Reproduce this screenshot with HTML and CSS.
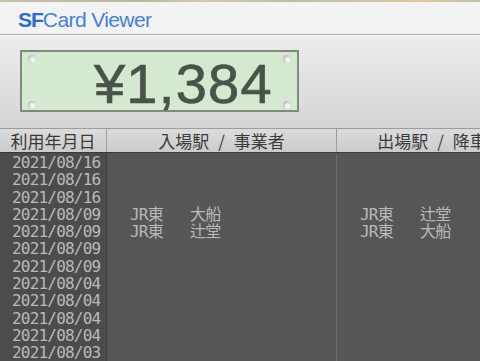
FILE: index.html
```html
<!DOCTYPE html>
<html lang="ja">
<head>
    <meta charset="UTF-8">
    <title>SFCard Viewer</title>
    <link rel="stylesheet" href="styles.css">
</head>
<body>
    <div class="window-edge"></div>

    <div class="titlebar">
        <span class="title"><b>SF</b>Card Viewer</span>
    </div>

    <div class="panel">
        <div class="display">
            <span class="screw tl"></span>
            <span class="screw bl"></span>
            <span class="screw tr"></span>
            <span class="screw br"></span>
            ¥1,384
        </div>
    </div>

    <div class="history">
        <div class="thead">
            <div class="th">利用年月日</div>
            <div class="th">入場駅 / 事業者</div>
            <div class="th">出場駅 / 降車駅</div>
        </div>

        <div class="tbody">
            <div class="row"><div class="date">2021/08/16</div><div class="cell"></div><div class="cell"></div></div>
            <div class="row"><div class="date">2021/08/16</div><div class="cell"></div><div class="cell"></div></div>
            <div class="row"><div class="date">2021/08/16</div><div class="cell"></div><div class="cell"></div></div>
            <div class="row">
                <div class="date">2021/08/09</div>
                <div class="cell"><span class="co">JR東</span>大船</div>
                <div class="cell"><span class="co">JR東</span>辻堂</div>
            </div>
            <div class="row">
                <div class="date">2021/08/09</div>
                <div class="cell"><span class="co">JR東</span>辻堂</div>
                <div class="cell"><span class="co">JR東</span>大船</div>
            </div>
            <div class="row"><div class="date">2021/08/09</div><div class="cell"></div><div class="cell"></div></div>
            <div class="row"><div class="date">2021/08/09</div><div class="cell"></div><div class="cell"></div></div>
            <div class="row"><div class="date">2021/08/04</div><div class="cell"></div><div class="cell"></div></div>
            <div class="row"><div class="date">2021/08/04</div><div class="cell"></div><div class="cell"></div></div>
            <div class="row"><div class="date">2021/08/04</div><div class="cell"></div><div class="cell"></div></div>
            <div class="row"><div class="date">2021/08/04</div><div class="cell"></div><div class="cell"></div></div>
            <div class="row"><div class="date">2021/08/03</div><div class="cell"></div><div class="cell"></div></div>
        </div>
    </div>
</body>
</html>
```

FILE: styles.css
```css
* {
    margin: 0;
    padding: 0;
    box-sizing: border-box;
}

body {
    width: 480px;
    height: 361px;
    overflow: hidden;
    background: #555555;
    font-family: "Liberation Sans", Arial, sans-serif;
}

/* thin strip of the window frame above the title */
.window-edge {
    height: 2px;
    background: linear-gradient(90deg, #c6bfab 0%, #bcb5a1 30%, #d6cca6 42%, #c1baa6 60%, #dacd9e 88%, #c3bca8 100%);
}

.titlebar {
    height: 33px;
    background: #f3f3f3;
    border-bottom: 1px solid #a6a6a6;
    padding: 3px 0 0 18px;
    display: flex;
    align-items: center;
}

.title {
    font-size: 21px;
    color: #4580dc;
    letter-spacing: -0.6px;
}

.title b {
    color: #2a6ad2;
    letter-spacing: -1px;
}

.panel {
    height: 93px;
    border-top: 1px solid #fbfbfb;
    background: linear-gradient(#ededed, #d5d5d5);
    padding: 14px 0 0 20px;
}

.display {
    position: relative;
    width: 279px;
    height: 62px;
    border: 2px solid #808a7e;
    background: #d5e9d0;
    text-align: right;
    padding-right: 24px;
    font-size: 56px;
    line-height: 63px;
    letter-spacing: 1.3px;
    color: #4a534a;
    -webkit-text-stroke: 0.7px #4a534a;
}

.screw {
    position: absolute;
    width: 8px;
    height: 8px;
    border-radius: 50%;
    background: radial-gradient(circle at 62% 62%, #ffffff 0, #eeeeee 30%, #9b9e99 100%);
}

.screw.tl { left: 6px; top: 3px; }
.screw.bl { left: 6px; bottom: 1px; }
.screw.tr { right: 6px; top: 3px; }
.screw.br { right: 6px; bottom: 1px; }

.thead,
.row {
    display: grid;
    grid-template-columns: 107px 230px 208px;
}

.thead {
    height: 25px;
    border-top: 1px solid #9c9c9c;
    border-bottom: 1px solid #3a3a3a;
    background: linear-gradient(#dcdcdc, #cbcbcb);
}

.th {
    font-family: "Noto Sans CJK JP", sans-serif;
    font-size: 17px;
    line-height: 23px;
    color: #3a3a3a;
    text-align: center;
    white-space: nowrap;
    word-spacing: 5px;
    border-right: 1px solid #9d9d9d;
}

.tbody {
    padding-top: 1px;
    background: linear-gradient(90deg, #4c4c4c 106px, #3c3c3c 106px, #3c3c3c 107px, #565656 107px);
}

.row {
    height: 17.3px;
    line-height: 17.3px;
    font-family: "DejaVu Sans Mono", "Noto Sans CJK JP", monospace;
    font-size: 16px;
    letter-spacing: -0.8px;
    color: #bababa;
    white-space: nowrap;
}

.date {
    background: #4c4c4c;
    border-right: 1px solid #3c3c3c;
    padding-left: 12px;
}

.cell {
    background: #565656;
    padding-left: 23px;
}

.cell:nth-child(2) {
    border-right: 1px solid #6c6c6c;
}

.co {
    display: inline-block;
    width: 60px;
}
```
